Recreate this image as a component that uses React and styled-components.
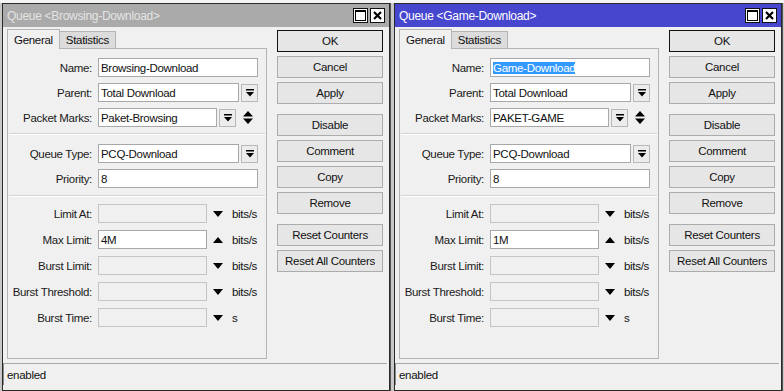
import React from 'react';
import styled, { createGlobalStyle } from 'styled-components';

const GlobalStyle = createGlobalStyle`
  html, body {
    margin: 0;
    padding: 0;
  }
  body {
    width: 784px;
    height: 391px;
    overflow: hidden;
    background: #c8c8c8;
    font-family: "Liberation Sans", Arial, sans-serif;
    font-size: 11.5px;
    letter-spacing: -0.3px;
    color: #111;
  }
`;

const Desktop = styled.div`
  display: flex;
  gap: 4px;
  padding: 3px 0 0 2px;
  height: 391px;
  box-sizing: border-box;
  background: linear-gradient(#f4f4f4 0 3px, #c8c8c8 3px);
`;

const Window = styled.div`
  width: 388px;
  box-sizing: border-box;
  border: 1px solid #2a2a2a;
  box-shadow: 1px 0 0 #555;
  background: #f0f0f0;
  display: flex;
  flex-direction: column;
`;

const TitleBar = styled.div`
  height: 23px;
  display: flex;
  align-items: center;
  justify-content: space-between;
  padding: 0 4px 0 4px;
  font-size: 12px;
  background: ${({ $active }) => ($active ? '#4646cf' : '#aaaaaa')};
  color: ${({ $active }) => ($active ? '#ffffff' : '#e4e4e4')};
`;

const TitleText = styled.span`
  white-space: nowrap;
`;

const TitleControls = styled.div`
  display: flex;
  gap: 2px;
`;

const ControlBox = styled.div`
  width: 15px;
  height: 15px;
  box-sizing: border-box;
  border: 1px solid #111;
  background: #ffffff;
  display: flex;
  align-items: center;
  justify-content: center;
`;

const Main = styled.div`
  display: flex;
  gap: 10px;
  padding: 2px 0 0 4px;
`;

const LeftColumn = styled.div`
  width: 260px;
  display: flex;
  flex-direction: column;
`;

const TabRow = styled.div`
  display: flex;
  align-items: flex-end;
  height: 19px;
  padding-left: 0;
`;

const Tab = styled.div`
  position: relative;
  z-index: ${({ $selected }) => ($selected ? 2 : 1)};
  height: ${({ $selected }) => ($selected ? '20px' : '17px')};
  margin-bottom: ${({ $selected }) => ($selected ? '-1px' : '0')};
  margin-left: ${({ $selected }) => ($selected ? '0' : '-1px')};
  box-sizing: border-box;
  padding: 0 6px;
  display: flex;
  align-items: center;
  border: 1px solid #b4b4b4;
  border-bottom: none;
  background: ${({ $selected }) => ($selected ? '#f0f0f0' : '#dcdcdc')};
`;

const Panel = styled.div`
  height: 311px;
  box-sizing: border-box;
  border: 1px solid #b4b4b4;
  padding-top: 9px;
`;

const Section = styled.div`
  display: flex;
  flex-direction: column;
  gap: ${({ $gap }) => $gap}px;
`;

const Separator = styled.div`
  border-top: 1px solid #d4d4d4;
  border-bottom: 1px solid #ffffff;
  margin: ${({ $before, $after }) => `${$before}px 1px ${$after}px`};
`;

const Row = styled.div`
  display: grid;
  grid-template-columns: 84px 160px;
  column-gap: 6px;
  align-items: center;
  height: 19px;
`;

const Label = styled.div`
  text-align: right;
  white-space: nowrap;
  color: #1a1a1a;
`;

const Field = styled.div`
  display: flex;
  align-items: center;
  gap: 2px;
  height: 19px;
`;

const TextBox = styled.div`
  box-sizing: border-box;
  height: 19px;
  width: ${({ $width }) => ($width ? `${$width}px` : 'auto')};
  flex: ${({ $width }) => ($width ? 'none' : '1')};
  border: 1px solid ${({ $disabled }) => ($disabled ? '#c4c4c4' : '#a8a8a8')};
  background: ${({ $disabled }) => ($disabled ? '#f0f0f0' : '#ffffff')};
  padding: 0 2px;
  display: flex;
  align-items: center;
  white-space: nowrap;
  overflow: hidden;
`;

const Selected = styled.span`
  background: #3399ff;
  color: #ffffff;
`;

const DropButton = styled.div`
  box-sizing: border-box;
  width: 17px;
  height: 18px;
  border: 1px solid #b8b8b8;
  background: #ececec;
  display: flex;
  align-items: center;
  justify-content: center;
`;

const SpinSlot = styled.div`
  width: 20px;
  display: flex;
  justify-content: center;
`;

const ArrowSlot = styled.div`
  width: 10px;
  margin: 0 7px 0 4px;
  display: flex;
  align-items: center;
`;

const Unit = styled.span`
  white-space: nowrap;
`;

const ButtonColumn = styled.div`
  width: 106px;
  padding-top: 1px;
  display: flex;
  flex-direction: column;
  gap: 4px;
`;

const Button = styled.div`
  box-sizing: border-box;
  height: 22px;
  margin-top: ${({ $spaced }) => ($spaced ? '6px' : '0')};
  border: 1px solid ${({ $default }) => ($default ? '#111111' : '#acacac')};
  background: #e6e6e6;
  display: flex;
  align-items: center;
  justify-content: center;
  white-space: nowrap;
`;

const StatusBar = styled.div`
  height: 22px;
  box-sizing: border-box;
  margin: 4px 2px 1px 0;
  border-top: 1px solid #a8a8a8;
  border-left: 1px solid #8a8a8a;
  padding-left: 3px;
  display: flex;
  align-items: center;
`;

const MaxIcon = () => (
  <svg width="11" height="11" viewBox="0 0 11 11">
    <rect x="0.5" y="0.5" width="10" height="10" fill="none" stroke="#000" />
    <rect x="0" y="0" width="11" height="2" fill="#000" />
  </svg>
);

const CloseIcon = () => (
  <svg width="9" height="9" viewBox="0 0 9 9">
    <path d="M1 1 L8 8 M8 1 L1 8" stroke="#000" strokeWidth="2.2" />
  </svg>
);

const DropIcon = () => (
  <svg width="8" height="8" viewBox="0 0 8 8">
    <rect x="0" y="0" width="8" height="1.5" fill="#000" />
    <polygon points="0,3 8,3 4,7.5" fill="#000" />
  </svg>
);

const SpinIcon = () => (
  <svg width="10" height="13" viewBox="0 0 10 13">
    <polygon points="5,0 10,5.5 0,5.5" fill="#000" />
    <polygon points="0,7.5 10,7.5 5,13" fill="#000" />
  </svg>
);

const Triangle = ({ up }) => (
  <svg width="10" height="6" viewBox="0 0 10 6">
    {up ? <polygon points="5,0 10,6 0,6" fill="#000" /> : <polygon points="0,0 10,0 5,6" fill="#000" />}
  </svg>
);

function LimitRow({ label, value, up, unit }) {
  return (
    <Row>
      <Label>{label}</Label>
      <Field>
        <TextBox $width={109} $disabled={!value}>{value}</TextBox>
        <ArrowSlot><Triangle up={up} /></ArrowSlot>
        <Unit>{unit}</Unit>
      </Field>
    </Row>
  );
}

const buttons = [
  { text: 'OK', isDefault: true },
  { text: 'Cancel' },
  { text: 'Apply' },
  { text: 'Disable', spaced: true },
  { text: 'Comment' },
  { text: 'Copy' },
  { text: 'Remove' },
  { text: 'Reset Counters', spaced: true },
  { text: 'Reset All Counters' },
];

function QueueWindow({ q }) {
  return (
    <Window>
      <TitleBar $active={q.active}>
        <TitleText>Queue &lt;{q.name}&gt;</TitleText>
        <TitleControls>
          <ControlBox><MaxIcon /></ControlBox>
          <ControlBox><CloseIcon /></ControlBox>
        </TitleControls>
      </TitleBar>
      <Main>
        <LeftColumn>
          <TabRow>
            <Tab $selected>General</Tab>
            <Tab>Statistics</Tab>
          </TabRow>
          <Panel>
            <Section $gap={6}>
              <Row>
                <Label>Name:</Label>
                <Field>
                  <TextBox>{q.active ? <Selected>{q.name}</Selected> : q.name}</TextBox>
                </Field>
              </Row>
              <Row>
                <Label>Parent:</Label>
                <Field>
                  <TextBox>Total Download</TextBox>
                  <DropButton><DropIcon /></DropButton>
                </Field>
              </Row>
              <Row>
                <Label>Packet Marks:</Label>
                <Field>
                  <TextBox>{q.marks}</TextBox>
                  <DropButton><DropIcon /></DropButton>
                  <SpinSlot><SpinIcon /></SpinSlot>
                </Field>
              </Row>
            </Section>
            <Separator $before={6} $after={9} />
            <Section $gap={6}>
              <Row>
                <Label>Queue Type:</Label>
                <Field>
                  <TextBox>PCQ-Download</TextBox>
                  <DropButton><DropIcon /></DropButton>
                </Field>
              </Row>
              <Row>
                <Label>Priority:</Label>
                <Field>
                  <TextBox>8</TextBox>
                </Field>
              </Row>
            </Section>
            <Separator $before={7} $after={7} />
            <Section $gap={7}>
              <LimitRow label="Limit At:" unit="bits/s" />
              <LimitRow label="Max Limit:" value={q.max} up unit="bits/s" />
              <LimitRow label="Burst Limit:" unit="bits/s" />
              <LimitRow label="Burst Threshold:" unit="bits/s" />
              <LimitRow label="Burst Time:" unit="s" />
            </Section>
          </Panel>
        </LeftColumn>
        <ButtonColumn>
          {buttons.map((b) => (
            <Button key={b.text} $default={b.isDefault} $spaced={b.spaced}>{b.text}</Button>
          ))}
        </ButtonColumn>
      </Main>
      <StatusBar>enabled</StatusBar>
    </Window>
  );
}

const queues = [
  { name: 'Browsing-Download', marks: 'Paket-Browsing', max: '4M', active: false },
  { name: 'Game-Download', marks: 'PAKET-GAME', max: '1M', active: true },
];

export default function App() {
  return (
    <>
      <GlobalStyle />
      <Desktop>
        {queues.map((q) => (
          <QueueWindow key={q.name} q={q} />
        ))}
      </Desktop>
    </>
  );
}
